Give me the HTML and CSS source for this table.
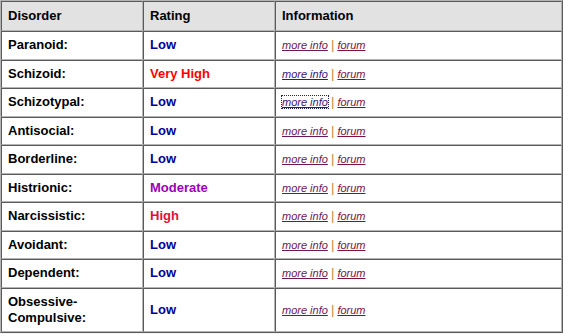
FILE: index.html
```html
<!DOCTYPE html>
<html>
<head>
<meta charset="utf-8">
<link rel="stylesheet" href="styles.css">
</head>
<body>
<table class="pd">
  <colgroup>
    <col class="c1"><col class="c2"><col class="c3">
  </colgroup>
  <thead>
    <tr><th>Disorder</th><th>Rating</th><th>Information</th></tr>
  </thead>
  <tbody>
    <tr><td class="name">Paranoid:</td><td class="r low">Low</td><td class="info"><a class="mi" href="#">more info</a> <span class="bar">|</span> <a class="fo" href="#">forum</a></td></tr>
    <tr><td class="name">Schizoid:</td><td class="r vhigh">Very High</td><td class="info"><a class="mi v" href="#">more info</a> <span class="bar">|</span> <a class="fo" href="#">forum</a></td></tr>
    <tr><td class="name">Schizotypal:</td><td class="r low">Low</td><td class="info"><a class="mi v focus" href="#">more info</a> <span class="bar">|</span> <a class="fo" href="#">forum</a></td></tr>
    <tr><td class="name">Antisocial:</td><td class="r low">Low</td><td class="info"><a class="mi" href="#">more info</a> <span class="bar">|</span> <a class="fo" href="#">forum</a></td></tr>
    <tr><td class="name">Borderline:</td><td class="r low">Low</td><td class="info"><a class="mi" href="#">more info</a> <span class="bar">|</span> <a class="fo" href="#">forum</a></td></tr>
    <tr><td class="name">Histrionic:</td><td class="r mod">Moderate</td><td class="info"><a class="mi" href="#">more info</a> <span class="bar">|</span> <a class="fo" href="#">forum</a></td></tr>
    <tr><td class="name">Narcissistic:</td><td class="r high">High</td><td class="info"><a class="mi" href="#">more info</a> <span class="bar">|</span> <a class="fo" href="#">forum</a></td></tr>
    <tr><td class="name">Avoidant:</td><td class="r low">Low</td><td class="info"><a class="mi" href="#">more info</a> <span class="bar">|</span> <a class="fo" href="#">forum</a></td></tr>
    <tr><td class="name">Dependent:</td><td class="r low">Low</td><td class="info"><a class="mi" href="#">more info</a> <span class="bar">|</span> <a class="fo" href="#">forum</a></td></tr>
    <tr><td class="name">Obsessive-<br>Compulsive:</td><td class="r low">Low</td><td class="info"><a class="mi" href="#">more info</a> <span class="bar">|</span> <a class="fo" href="#">forum</a></td></tr>
  </tbody>
</table>
</body>
</html>
```
FILE: styles.css
```css
html, body {
  margin: 0;
  padding: 0;
  background: #f6f6f6;
}
.pd {
  width: 563px;
  border-collapse: separate;
  border-spacing: 0;
  table-layout: fixed;
  border: 1px solid;
  border-color: #b4b4b4 #5a5a5a #5a5a5a #b4b4b4;
  background: #fff;
  font-family: "Liberation Sans", Arial, sans-serif;
  font-size: 13px;
  line-height: 16px;
  color: #000;
}
.c1 { width: 142px; }
.c2 { width: 132px; }
.c3 { width: 287px; }
.pd th, .pd td {
  border: 1px solid;
  border-color: #5a5a5a #b4b4b4 #b4b4b4 #5a5a5a;
  padding: 5.25px 5px 5.25px 6px;
  text-align: left;
  vertical-align: middle;
  font-weight: bold;
}
.pd th {
  background: #e2e2e2;
  padding-top: 6px;
  padding-bottom: 6px;
}
.pd td.info {
  font-weight: normal;
  font-size: 11px;
  font-style: italic;
}
.low { color: #000099; }
.vhigh { color: #ff0000; }
.high { color: #e0103c; }
.mod { color: #a000b4; }
.mi { color: #6b1858; text-decoration: underline; }
.mi.v { color: #3c1478; }
.fo { color: #80103c; text-decoration: underline; }
.focus { outline: 1px dotted #20206a; outline-offset: 0; }
.bar {
  font-style: normal;
  font-size: 13px;
  color: #c08a40;
}
```
